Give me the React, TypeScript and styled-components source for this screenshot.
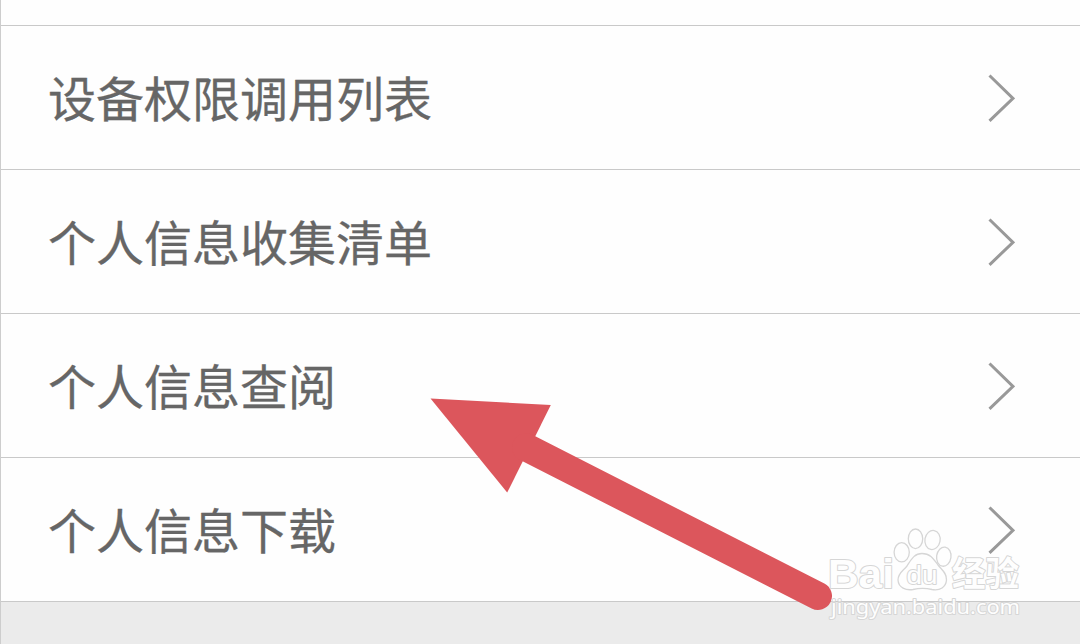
import * as React from "react";
import styled, { createGlobalStyle } from "styled-components";

const GlobalStyle = createGlobalStyle`
  * {
    box-sizing: border-box;
  }

  body {
    margin: 0;
    background-color: #ebebeb;
    font-family: "Noto Sans CJK SC", "Noto Sans", sans-serif;
  }
`;

const Page = styled.main`
  position: relative;
  width: 1080px;
  height: 644px;
  overflow: hidden;

  border-left: 1px solid #cdcdcd;
  background-color: #ebebeb;
`;

const List = styled.ul`
  list-style: none;
  margin: 0;
  padding: 0;
`;

const Row = styled.li<{ $height?: number }>`
  display: flex;
  align-items: center;
  justify-content: space-between;
  height: ${({ $height = 144 }) => $height}px;
  padding: 0 65px 3px 47px;

  border-bottom: 1px solid #c9c9c9;
  background-color: #fefefe;
`;

const Label = styled.span`
  color: #666;
  font-size: 48px;
  line-height: 70px;
  white-space: nowrap;
  -webkit-text-stroke: 0.3px #666;
`;

const Chevron = styled.svg`
  display: block;
  width: 28px;
  height: 52px;

  fill: none;
  stroke: #999;
  stroke-width: 3;
`;

const Overlay = styled.svg`
  position: absolute;
  top: 0;
  left: -1px;
  pointer-events: none;
`;

const Mark = styled.g`
  fill: #fefefe;
  stroke: #d6d6d6;
  stroke-width: 2;
  stroke-linejoin: round;
  paint-order: stroke;
`;

const Paw = styled.g`
  stroke-width: 1.3;
  paint-order: normal;
`;

const items = ["设备权限调用列表", "个人信息收集清单", "个人信息查阅", "个人信息下载"];

const Arrow: React.FC = () => (
  <g fill="#dc565c">
    <path d="M430.5 398.5 L550.8 405 L507.2 492.6 Z" />
    <path d="M526 447.3 L818 596" stroke="#dc565c" strokeWidth="28" strokeLinecap="round" />
  </g>
);

const Watermark: React.FC = () => (
  <Mark>
    <text x="828" y="587.5" fontFamily="Liberation Sans" fontWeight="700" fontSize="41" textLength="66" lengthAdjust="spacingAndGlyphs">
      Bai
    </text>
    <Paw>
      <ellipse cx="901.7" cy="552.3" rx="7.6" ry="9.6" />
      <ellipse cx="915.5" cy="538.8" rx="7.2" ry="9.8" />
      <ellipse cx="932.5" cy="540" rx="7.6" ry="9.6" transform="rotate(10 932.5 540)" />
      <ellipse cx="943.8" cy="556.7" rx="7.2" ry="9.6" transform="rotate(8 943.8 556.7)" />
      <path d="M922 553.5 C914 553.5 911 560 907 566 C903 571 898 573 898 580 C898.5 588 906 590.5 913 589.5 C919 588 926 588 932 589.5 C940 591 946 587 946.5 580 C946.8 573 942 570 938 565 C933 558 930 553.5 922 553.5 Z" />
    </Paw>
    <text x="906.5" y="583.5" fontFamily="Liberation Sans" fontSize="26" textLength="31" lengthAdjust="spacingAndGlyphs">
      du
    </text>
    <text x="952" y="586" fontFamily="Noto Sans CJK SC" fontWeight="700" fontSize="34" textLength="67" lengthAdjust="spacingAndGlyphs">
      经验
    </text>
    <text x="831" y="613.5" fontFamily="Noto Sans" fontSize="20.5" textLength="189" lengthAdjust="spacingAndGlyphs">
      jingyan.baidu.com
    </text>
  </Mark>
);

export default function App() {
  return (
    <>
      <GlobalStyle />
      <Page>
        <List>
          <Row $height={26} />
          {items.map((item) => (
            <Row key={item}>
              <Label>{item}</Label>
              <Chevron viewBox="0 0 28 52">
                <path d="M2.5 5.5 L26 28.3 L2.5 50.8" />
              </Chevron>
            </Row>
          ))}
        </List>
        <Overlay width="1080" height="644" viewBox="0 0 1080 644">
          <Arrow />
          <Watermark />
        </Overlay>
      </Page>
    </>
  );
}
